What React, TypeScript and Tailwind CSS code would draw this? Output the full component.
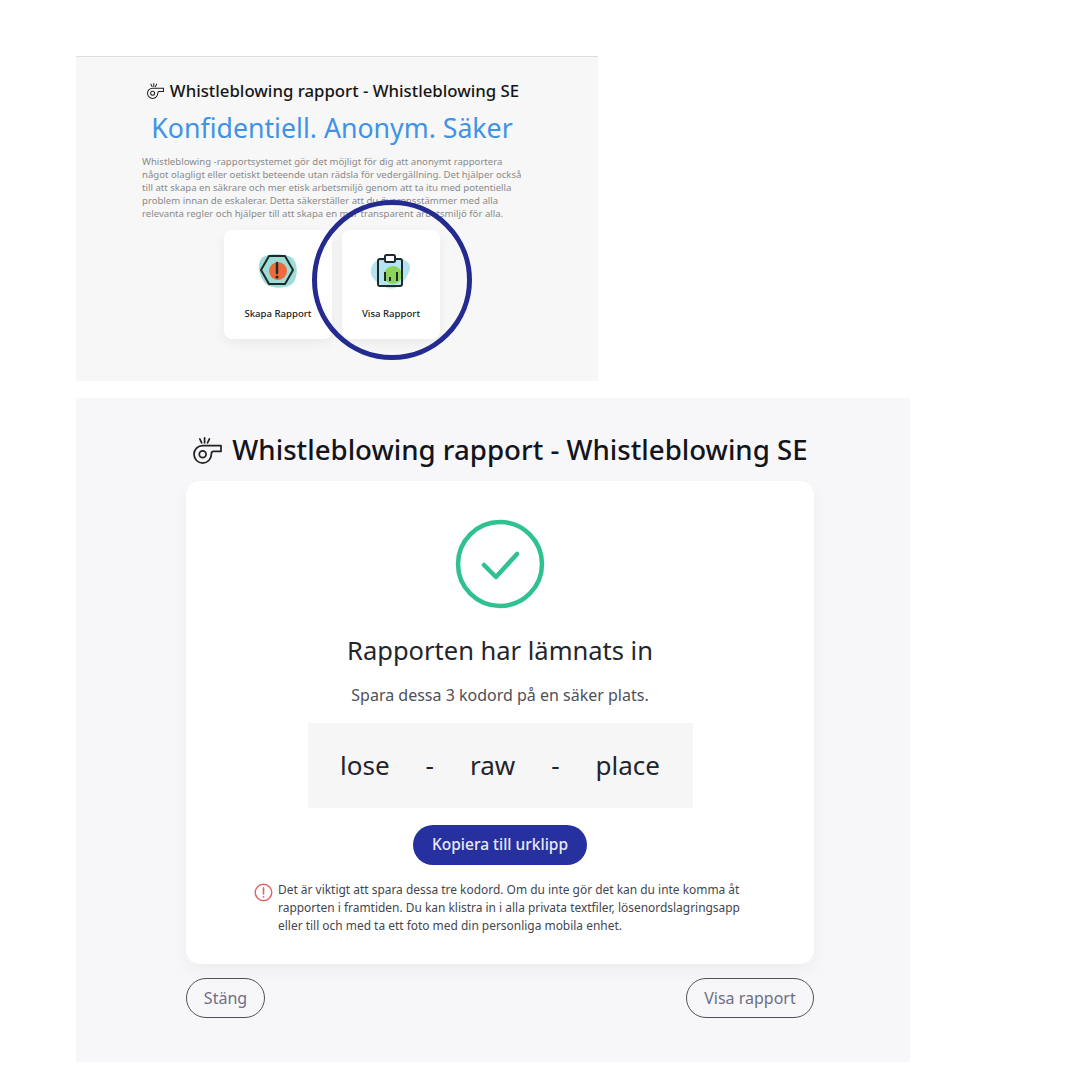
const font = { fontFamily: '"Noto Sans", "Liberation Sans", sans-serif' };

function Whistle({ className }: { className: string }) {
  return (
    <svg viewBox="0 0 32 28" fill="none" stroke="#222" strokeWidth="1.8" strokeLinecap="round" strokeLinejoin="round" className={className}>
      <path d="M8 2l2 4M13 1v5M18 2l-2 4" />
      <path d="M30 9H11a9 9 0 1 0 9 9c0-2 .5-3 2-3h8z" />
      <circle cx="11" cy="18" r="3.5" />
    </svg>
  );
}

function Card({ label, children, className }: { label: string; children: React.ReactNode; className: string }) {
  return (
    <div className={`flex h-[109px] flex-col items-center rounded-lg bg-white pt-[20px] shadow-[0_4px_12px_rgba(0,0,0,0.06)] ${className}`}>
      <div className="h-[46px] w-[46px]">{children}</div>
      <div className="mt-[11px] text-[9.6px] font-medium leading-[14px] text-[#222]">{label}</div>
    </div>
  );
}

export default function App() {
  return (
    <div className="relative h-[1080px] w-[1080px] overflow-hidden bg-white pl-[76px] pt-[56px] antialiased" style={font}>
      <section className="h-[325px] w-[522px] border-t border-[#dcdcdc] bg-[#f7f7f7] pt-[23px]">
        <h2 className="flex h-[22px] items-center justify-center gap-[5px] pr-[9px] text-[16.8px] font-medium text-[#161616]">
          <Whistle className="h-[16px] w-[19px]" />
          <span>Whistleblowing rapport - Whistleblowing SE</span>
        </h2>
        <h1 className="mt-[8px] pr-[10px] text-center text-[26.7px] leading-[36px] text-[#3f93e6]">Konfidentiell. Anonym. Säker</h1>
        <p className="ml-[66px] mt-[9px] whitespace-nowrap text-[9.6px] leading-[13px] text-[#8a8a8a]">
          <span className="block">Whistleblowing -rapportsystemet gör det möjligt för dig att anonymt rapportera</span>
          <span className="block">något olagligt eller oetiskt beteende utan rädsla för vedergällning. Det hjälper också</span>
          <span className="block">till att skapa en säkrare och mer etisk arbetsmiljö genom att ta itu med potentiella</span>
          <span className="block">problem innan de eskalerar. Detta säkerställer att du överensstämmer med alla</span>
          <span className="block">relevanta regler och hjälper till att skapa en mer transparent arbetsmiljö för alla.</span>
        </p>
        <div className="ml-[148px] mt-[10px] flex gap-[10px]">
          <Card label="Skapa Rapport" className="w-[108px]">
            <svg viewBox="0 0 46 46" fill="none" className="h-[46px] w-[46px]">
              <path d="M8 7c8-4 20-3 28 0 8 5 7 22 1 27-7 5-20 5-26 0C4 28 1 12 8 7z" fill="#9fdcd8" />
              <circle cx="23" cy="21" r="9" fill="#ee6a3c" />
              <path d="M14 6h16l8 14-8 14H14L6 20z" stroke="#1d2a2a" strokeWidth="2" strokeLinejoin="round" />
              <path d="M22 13v10" stroke="#1d2a2a" strokeWidth="2.4" strokeLinecap="round" />
              <circle cx="22" cy="27" r="1.5" fill="#1d2a2a" />
            </svg>
          </Card>
          <Card label="Visa Rapport" className="w-[98px]">
            <svg viewBox="0 0 46 46" fill="none" className="h-[46px] w-[46px]">
              <path d="M3 19C5 9 18 5 28 8c11 1 17 6 13 14-4 9-11 19-21 16C11 35 1 28 3 19z" fill="#b5e3ef" />
              <circle cx="25" cy="25" r="9" fill="#8fd45a" />
              <rect x="10" y="9" width="24" height="27" rx="2" stroke="#1c2b2b" strokeWidth="2" />
              <rect x="17" y="5" width="10" height="7" rx="1.5" fill="#fff" stroke="#1c2b2b" strokeWidth="2" />
              <path d="M17 31v-9M22 31v-4M29 31v-9" stroke="#1c2b2b" strokeWidth="2" />
            </svg>
          </Card>
        </div>
      </section>

      <section className="mt-[17px] h-[664px] w-[834px] bg-[#f7f7f9] pl-[110px] pt-[33px]">
        <h2 className="flex h-[38px] w-[628px] items-center justify-center gap-[9px] text-[27.65px] font-medium text-[#14141c]">
          <Whistle className="h-[27px] w-[31px]" />
          <span>Whistleblowing rapport - Whistleblowing SE</span>
        </h2>
        <div className="mt-[12px] flex h-[483px] w-[628px] flex-col items-center rounded-[14px] bg-white pt-[38px] shadow-[0_8px_18px_rgba(0,0,0,0.04)]">
          <svg viewBox="0 0 90 90" fill="none" className="h-[90px] w-[90px]">
            <circle cx="45" cy="45" r="42" stroke="#2fc28e" strokeWidth="4.5" />
            <path d="M29 46l12 12 21-23" stroke="#2fc28e" strokeWidth="4.5" strokeLinecap="round" strokeLinejoin="round" />
          </svg>
          <h3 className="mt-[24px] text-[25.5px] leading-[34px] text-[#24242c]">Rapporten har lämnats in</h3>
          <p className="mt-[17px] text-[16px] leading-[22px] text-[#4e5058]">Spara dessa 3 kodord på en säker plats.</p>
          <div className="mt-[17px] flex h-[85px] w-[385px] items-center justify-center gap-[36px] bg-[#f6f6f7] text-[26px] text-[#24242c]">
            <span>lose</span><span>-</span><span>raw</span><span>-</span><span>place</span>
          </div>
          <button className="mt-[17px] h-[40px] w-[174px] rounded-[20px] bg-[#26309e] text-[15.5px] font-medium text-[#e8e8f8]">Kopiera till urklipp</button>
          <div className="ml-[68px] mt-[16px] flex w-[488px] items-start gap-[5px] self-start">
            <svg viewBox="0 0 20 20" fill="none" className="mt-[2px] h-[19px] w-[19px] shrink-0">
              <circle cx="10" cy="10" r="8.7" stroke="#d9666c" strokeWidth="1.5" />
              <path d="M10 5v6.5" stroke="#d9666c" strokeWidth="1.7" strokeLinecap="round" />
              <circle cx="10" cy="14.6" r="1" fill="#d9666c" />
            </svg>
            <p className="whitespace-nowrap text-[11.95px] leading-[18px] text-[#44464e]">
              <span className="block">Det är viktigt att spara dessa tre kodord. Om du inte gör det kan du inte komma åt</span>
              <span className="block">rapporten i framtiden. Du kan klistra in i alla privata textfiler, lösenordslagringsapp</span>
              <span className="block">eller till och med ta ett foto med din personliga mobila enhet.</span>
            </p>
          </div>
        </div>
        <div className="mt-[14px] flex w-[628px] justify-between">
          <button className="h-[40px] w-[79px] rounded-[20px] border border-[#50505c] text-[16px] text-[#6c6e86]">Stäng</button>
          <button className="h-[40px] w-[128px] rounded-[20px] border border-[#50505c] text-[16px] text-[#6c6e86]">Visa rapport</button>
        </div>
      </section>

      <div className="absolute left-[312px] top-[200px] h-[160px] w-[160px] rounded-full border-[5px] border-[#232a90]" />
    </div>
  );
}
